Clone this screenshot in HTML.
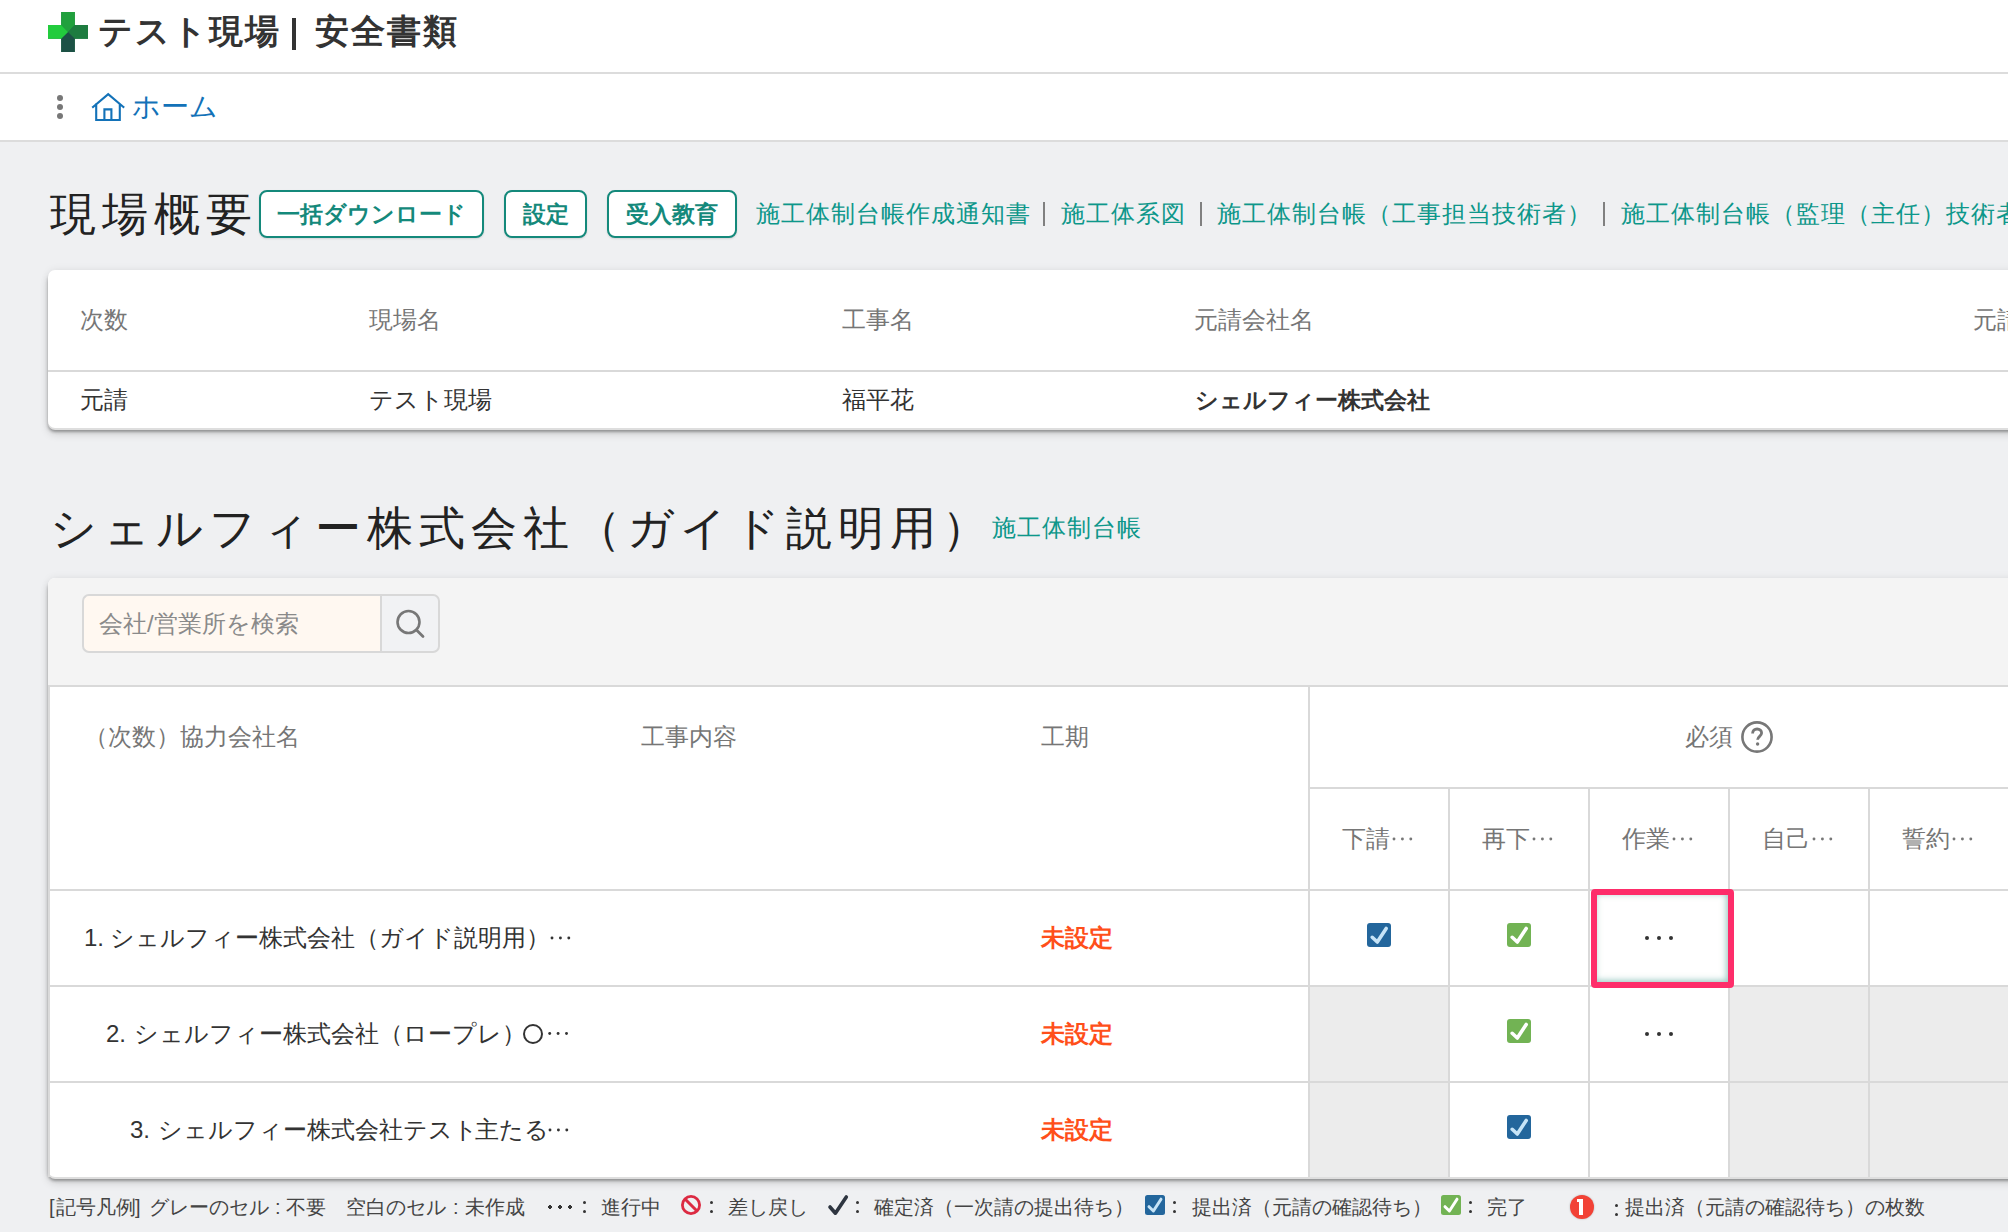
<!DOCTYPE html>
<html lang="ja">
<head>
<meta charset="utf-8">
<style>
html,body{margin:0;padding:0;}
body{width:2008px;height:1232px;overflow:hidden;position:relative;background:#eff0f2;font-family:"Liberation Sans",sans-serif;color:#333;}
.a{position:absolute;white-space:nowrap;}
#hdr{left:0;top:0;width:2008px;height:72px;background:#fff;border-bottom:2px solid #dcdcdc;}
#bc{left:0;top:74px;width:2008px;height:66px;background:#fff;border-bottom:2px solid #dcdcdc;}
.t24{font-size:24px;line-height:24px;}
.gray{color:#767676;}
.teal{color:#0d978a;}
.btn{position:absolute;top:190px;height:44px;border:2px solid #14897b;border-radius:8px;background:#fff;color:#14897b;font-weight:bold;font-size:23px;line-height:44px;text-align:center;box-shadow:0 1px 2px rgba(0,0,0,.12);}
.sep{position:absolute;top:202px;width:2px;height:24px;background:#808080;}
.card{position:absolute;background:#fff;border-radius:7px;box-shadow:0 2px 0 #dedede,0 4px 3px rgba(0,0,0,.3),0 6px 8px rgba(0,0,0,.14),0 0 8px rgba(0,0,0,.07);}
.vl{position:absolute;width:2px;background:#d9d9d9;}
.hl{position:absolute;height:2px;background:#d9d9d9;}
.gc{position:absolute;background:#ececec;}
.cb{position:absolute;width:24px;height:24px;border-radius:3px;}
.cbb{background:#23669c;}
.cbg{background:#72b354;}
.dots{position:absolute;width:4px;height:4px;border-radius:2px;background:#333;}
.ms{color:#ff4f1a;font-weight:bold;}
.d3{position:absolute;width:20px;height:3px;background:radial-gradient(circle at 1.5px 1.5px,#333 1.3px,transparent 1.6px) 0 0/8.5px 3px repeat-x;}
.d3.g{background-image:radial-gradient(circle at 1.5px 1.5px,#777 1.3px,transparent 1.6px);}
.lg{font-size:20px;line-height:20px;color:#444;}
</style>
</head>
<body>
<!-- header -->
<div id="hdr" class="a"></div>
<svg class="a" style="left:48px;top:12px" width="40" height="40" viewBox="48 12 40 40">
<path d="M61.2 12 H74.8 V25.1 H88 V38.7 H74.8 V52 H61.2 V38.7 H48 V25.1 H61.2 Z" fill="#1f7a44"/>
<polygon fill="#21a03d" points="61.2,12 74.8,12 74.8,25.1 68,31.9 61.2,25.1"/>
<polygon fill="#1e7c40" points="74.8,25.1 88,25.1 88,38.7 74.8,38.7 68,31.9"/>
<polygon fill="#1c5145" points="61.2,38.7 68,31.9 74.8,38.7 74.8,52 61.2,52"/>
<polygon fill="#22cc3d" points="48,25.1 61.2,25.1 68,31.9 61.2,38.7 48,38.7"/>
</svg>
<div id="title" class="a" style="left:98px;top:14px;font-size:34px;line-height:34px;letter-spacing:2px;font-weight:bold;color:#333">テスト現場</div>
<div class="a" style="left:292px;top:18px;width:4px;height:32px;background:#333"></div>
<div class="a" style="left:315px;top:14px;font-size:34px;line-height:34px;letter-spacing:2px;font-weight:bold;color:#333">安全書類</div>

<!-- breadcrumb -->
<div id="bc" class="a"></div>
<div class="a" style="left:57px;top:95px;width:6px;height:6px;border-radius:3px;background:#777"></div>
<div class="a" style="left:57px;top:104px;width:6px;height:6px;border-radius:3px;background:#777"></div>
<div class="a" style="left:57px;top:113px;width:6px;height:6px;border-radius:3px;background:#777"></div>
<svg class="a" style="left:88px;top:88px" width="40" height="36" viewBox="88 88 40 36">
<path d="M93 107 L108.2 94.2 L123.4 107 M96.2 104.2 V120 H119.8 V104.2 M104.4 120 V109.4 H111.4 V120" fill="none" stroke="#1372b8" stroke-width="2.1" stroke-linejoin="miter" stroke-linecap="square"/>
</svg>
<div id="home" class="a" style="left:132px;top:93px;font-size:28px;line-height:28px;color:#1372b8">ホーム</div>

<!-- section 1 -->
<div id="h1" class="a" style="left:50px;top:191px;font-size:46px;line-height:46px;letter-spacing:6px;color:#222">現場概要</div>
<div class="btn" style="left:259px;width:221px">一括ダウンロード</div>
<div class="btn" style="left:504px;width:79px">設定</div>
<div class="btn" style="left:607px;width:126px">受入教育</div>
<div class="a t24 teal" style="left:756px;top:202px;letter-spacing:1px">施工体制台帳作成通知書</div>
<div class="sep" style="left:1043px"></div>
<div class="a t24 teal" style="left:1061px;top:202px;letter-spacing:1px">施工体系図</div>
<div class="sep" style="left:1200px"></div>
<div class="a t24 teal" style="left:1217px;top:202px;letter-spacing:1px">施工体制台帳（工事担当技術者）</div>
<div class="sep" style="left:1603px"></div>
<div class="a t24 teal" style="left:1621px;top:202px;letter-spacing:1px">施工体制台帳（監理（主任）技術者）</div>

<!-- card 1 -->
<div class="card" style="left:48px;top:270px;width:2100px;height:158px"></div>
<div class="hl" style="left:48px;top:370px;width:1960px"></div>
<div class="a t24 gray" style="left:80px;top:308px">次数</div>
<div class="a t24 gray" style="left:369px;top:308px">現場名</div>
<div class="a t24 gray" style="left:842px;top:308px">工事名</div>
<div class="a t24 gray" style="left:1194px;top:308px">元請会社名</div>
<div class="a t24 gray" style="left:1973px;top:308px">元請</div>
<div class="a t24" style="left:80px;top:388px">元請</div>
<div class="a t24" style="left:369px;top:388px">テスト現場</div>
<div class="a t24" style="left:842px;top:388px">福平花</div>
<div class="a t24" style="left:1195px;top:388px;font-weight:bold;font-size:23px">シェルフィー株式会社</div>

<!-- section 2 -->
<div id="h2" class="a" style="left:50px;top:505px;font-size:46px;line-height:46px;letter-spacing:6px;color:#222">シェルフィー株式会社（ガイド説明用）</div>
<div class="a t24 teal" style="left:992px;top:516px;letter-spacing:1px">施工体制台帳</div>

<!-- card 2 -->
<div class="card" style="left:48px;top:578px;width:2100px;height:599px;overflow:hidden">
  <div style="position:absolute;left:0;top:0;width:100%;height:107px;background:#f4f4f4"></div>
</div>
<div class="hl" style="left:48px;top:685px;width:1960px"></div>
<!-- search -->
<div class="a" style="left:82px;top:594px;width:298px;height:59px;box-sizing:border-box;border:2px solid #d8d8d8;border-right:none;border-radius:7px 0 0 7px;background:#fff8f1"></div>
<div class="a" style="left:380px;top:594px;width:60px;height:59px;box-sizing:border-box;border:2px solid #d8d8d8;border-radius:0 7px 7px 0;background:#f1f2f4"></div>
<div class="a t24" style="left:99px;top:612px;color:#8a8a8a">会社/営業所を検索</div>
<svg class="a" style="left:390px;top:604px" width="40" height="40" viewBox="0 0 40 40">
<circle cx="18.5" cy="18" r="11" fill="none" stroke="#777" stroke-width="2.6"/>
<path d="M26.5 26 L33 32.5" stroke="#777" stroke-width="2.8" stroke-linecap="round"/>
</svg>

<!-- table header -->
<div class="a t24 gray" style="left:84px;top:725px">（次数）協力会社名</div>
<div class="a t24 gray" style="left:641px;top:725px">工事内容</div>
<div class="a t24 gray" style="left:1041px;top:725px">工期</div>
<div class="a t24 gray" style="left:1685px;top:725px">必須</div>
<svg class="a" style="left:1740px;top:720px" width="34" height="34" viewBox="0 0 34 34">
<circle cx="17" cy="17" r="14.6" fill="none" stroke="#777" stroke-width="2.6"/>
<path d="M12.6 13.4 C12.6 10.6 14.6 9 17.1 9 C19.7 9 21.6 10.7 21.6 13.1 C21.6 16.2 17.6 16.6 17.6 19.8" fill="none" stroke="#777" stroke-width="2.8"/>
<circle cx="17.6" cy="24" r="1.7" fill="#777"/>
</svg>
<div class="hl" style="left:1308px;top:787px;width:700px"></div>
<div class="a t24 gray" style="left:1342px;top:827px">下請</div><svg class="a" style="left:1391px;top:836px" width="23" height="6" fill="#777"><circle cx="3.00" cy="3.00" r="1.45"/><circle cx="11.40" cy="3.00" r="1.45"/><circle cx="19.80" cy="3.00" r="1.45"/></svg>
<div class="a t24 gray" style="left:1482px;top:827px">再下</div><svg class="a" style="left:1531px;top:836px" width="23" height="6" fill="#777"><circle cx="3.00" cy="3.00" r="1.45"/><circle cx="11.40" cy="3.00" r="1.45"/><circle cx="19.80" cy="3.00" r="1.45"/></svg>
<div class="a t24 gray" style="left:1622px;top:827px">作業</div><svg class="a" style="left:1671px;top:836px" width="23" height="6" fill="#777"><circle cx="3.00" cy="3.00" r="1.45"/><circle cx="11.40" cy="3.00" r="1.45"/><circle cx="19.80" cy="3.00" r="1.45"/></svg>
<div class="a t24 gray" style="left:1762px;top:827px">自己</div><svg class="a" style="left:1811px;top:836px" width="23" height="6" fill="#777"><circle cx="3.00" cy="3.00" r="1.45"/><circle cx="11.40" cy="3.00" r="1.45"/><circle cx="19.80" cy="3.00" r="1.45"/></svg>
<div class="a t24 gray" style="left:1902px;top:827px">誓約</div><svg class="a" style="left:1951px;top:836px" width="23" height="6" fill="#777"><circle cx="3.00" cy="3.00" r="1.45"/><circle cx="11.40" cy="3.00" r="1.45"/><circle cx="19.80" cy="3.00" r="1.45"/></svg>

<!-- gray cells -->
<div class="gc" style="left:1310px;top:987px;width:138px;height:94px"></div>
<div class="gc" style="left:1730px;top:987px;width:138px;height:94px"></div>
<div class="gc" style="left:1870px;top:987px;width:138px;height:94px"></div>
<div class="gc" style="left:1310px;top:1083px;width:138px;height:94px"></div>
<div class="gc" style="left:1730px;top:1083px;width:138px;height:94px"></div>
<div class="gc" style="left:1870px;top:1083px;width:138px;height:94px"></div>

<!-- grid -->
<div class="hl" style="left:48px;top:889px;width:1960px"></div>
<div class="hl" style="left:48px;top:985px;width:1960px"></div>
<div class="hl" style="left:48px;top:1081px;width:1960px"></div>
<div class="vl" style="left:1308px;top:687px;height:490px"></div>
<div class="vl" style="left:1448px;top:789px;height:388px"></div>
<div class="vl" style="left:1588px;top:789px;height:388px"></div>
<div class="vl" style="left:1728px;top:789px;height:388px"></div>
<div class="vl" style="left:1868px;top:789px;height:388px"></div>
<div class="vl" style="left:48px;top:687px;height:490px;background:#dadada"></div>

<!-- rows -->
<div class="a t24" style="left:84px;top:926px">1.</div>
<div class="a t24" style="left:110px;top:926px">シェルフィー株式会社（ガイド説明用）</div>
<svg class="a" style="left:549px;top:935px" width="23" height="6" fill="#333"><circle cx="3.00" cy="3.00" r="1.45"/><circle cx="11.40" cy="3.00" r="1.45"/><circle cx="19.80" cy="3.00" r="1.45"/></svg>
<div class="a t24" style="left:106px;top:1022px">2.</div>
<div class="a t24" style="left:134px;top:1022px">シェルフィー株式会社（ロープレ）</div>
<div class="a" style="left:523px;top:1024px;width:16px;height:16px;border:2px solid #333;border-radius:50%"></div>
<svg class="a" style="left:546px;top:1030px" width="23" height="6" fill="#333"><circle cx="3.70" cy="3.50" r="1.45"/><circle cx="12.10" cy="3.50" r="1.45"/><circle cx="20.50" cy="3.50" r="1.45"/></svg>
<div class="a t24" style="left:130px;top:1118px">3.</div>
<div class="a t24" style="left:158px;top:1118px">シェルフィー株式会社テスト</div>
<div class="a t24" style="left:475px;top:1118px">主たる</div>
<svg class="a" style="left:547px;top:1127px" width="23" height="6" fill="#333"><circle cx="3.00" cy="3.00" r="1.45"/><circle cx="11.40" cy="3.00" r="1.45"/><circle cx="19.80" cy="3.00" r="1.45"/></svg>
<div class="a t24 ms" style="left:1041px;top:926px">未設定</div>
<div class="a t24 ms" style="left:1041px;top:1022px">未設定</div>
<div class="a t24 ms" style="left:1041px;top:1118px">未設定</div>

<!-- checkboxes -->
<svg class="a" style="left:1367px;top:923px" width="24" height="24" viewBox="0 0 24 24"><rect width="24" height="24" rx="3" fill="#23669c"/><path d="M5.2 14.3 L10.3 19 L19.2 5.5" fill="none" stroke="#c6e4f7" stroke-width="3.6" stroke-linecap="round" stroke-linejoin="round"/></svg>
<svg class="a" style="left:1507px;top:923px" width="24" height="24" viewBox="0 0 24 24"><rect width="24" height="24" rx="3" fill="#72b354"/><path d="M5.2 14.3 L10.3 19 L19.2 5.5" fill="none" stroke="#fff" stroke-width="3.6" stroke-linecap="round" stroke-linejoin="round"/></svg>
<svg class="a" style="left:1507px;top:1019px" width="24" height="24" viewBox="0 0 24 24"><rect width="24" height="24" rx="3" fill="#72b354"/><path d="M5.2 14.3 L10.3 19 L19.2 5.5" fill="none" stroke="#fff" stroke-width="3.6" stroke-linecap="round" stroke-linejoin="round"/></svg>
<svg class="a" style="left:1507px;top:1115px" width="24" height="24" viewBox="0 0 24 24"><rect width="24" height="24" rx="3" fill="#23669c"/><path d="M5.2 14.3 L10.3 19 L19.2 5.5" fill="none" stroke="#c6e4f7" stroke-width="3.6" stroke-linecap="round" stroke-linejoin="round"/></svg>

<!-- dots -->
<div class="dots" style="left:1645px;top:936px"></div>
<div class="dots" style="left:1657px;top:936px"></div>
<div class="dots" style="left:1669px;top:936px"></div>
<div class="dots" style="left:1645px;top:1032px"></div>
<div class="dots" style="left:1657px;top:1032px"></div>
<div class="dots" style="left:1669px;top:1032px"></div>

<!-- highlight -->
<div class="a" style="left:1591px;top:889px;width:143px;height:99px;box-sizing:border-box;border:6px solid #fe2d6a;border-radius:4px;box-shadow:inset -1.5px -1.5px 6px rgba(40,140,125,.5)"></div>

<!-- legend -->
<div class="a lg" style="left:49px;top:1197px">[</div>
<div class="a lg" style="left:56px;top:1197px">記号凡例</div>
<div class="a lg" style="left:135px;top:1197px">]</div>
<div class="a lg" style="left:149px;top:1197px">グレーのセル</div>
<div class="a lg" style="left:275px;top:1197px">:</div>
<div class="a lg" style="left:286px;top:1197px">不要</div>
<div class="a lg" style="left:346px;top:1197px">空白のセル</div>
<div class="a lg" style="left:453px;top:1197px">:</div>
<div class="a lg" style="left:465px;top:1197px">未作成</div>
<div class="a" style="left:548px;top:1205px;width:24px;height:4px;background:radial-gradient(circle at 2px 2px,#333 1.7px,transparent 2px) 0 0/10px 4px repeat-x"></div>
<div class="a" style="left:583px;top:1201px;width:3px;height:3px;border-radius:50%;background:#333"></div>
<div class="a" style="left:583px;top:1210px;width:3px;height:3px;border-radius:50%;background:#333"></div>
<div class="a lg" style="left:601px;top:1197px">進行中</div>
<svg class="a" style="left:680px;top:1194px" width="22" height="22" viewBox="0 0 22 22"><circle cx="11" cy="11" r="8.6" fill="none" stroke="#dc2a42" stroke-width="2.8"/><path d="M5 5 L17 17" stroke="#dc2a42" stroke-width="3"/></svg>
<div class="a" style="left:710px;top:1201px;width:3px;height:3px;border-radius:50%;background:#333"></div>
<div class="a" style="left:710px;top:1210px;width:3px;height:3px;border-radius:50%;background:#333"></div>
<div class="a lg" style="left:728px;top:1197px">差し戻し</div>
<svg class="a" style="left:826px;top:1194px" width="24" height="22" viewBox="0 0 24 22"><path d="M4 13 L9.4 19.2 L20.3 3" fill="none" stroke="#2e3540" stroke-width="3.6" stroke-linecap="round" stroke-linejoin="round"/></svg>
<div class="a" style="left:856px;top:1201px;width:3px;height:3px;border-radius:50%;background:#333"></div>
<div class="a" style="left:856px;top:1210px;width:3px;height:3px;border-radius:50%;background:#333"></div>
<div class="a lg" style="left:874px;top:1197px">確定済（一次請の提出待ち）</div>
<svg class="a" style="left:1145px;top:1195px" width="20" height="20" viewBox="0 0 20 20"><rect width="20" height="20" rx="2.5" fill="#23669c"/><path d="M4 11.7 L8.4 16 L16 4.2" fill="none" stroke="#c6e4f7" stroke-width="3" stroke-linecap="round" stroke-linejoin="round"/></svg>
<div class="a" style="left:1173px;top:1201px;width:3px;height:3px;border-radius:50%;background:#333"></div>
<div class="a" style="left:1173px;top:1210px;width:3px;height:3px;border-radius:50%;background:#333"></div>
<div class="a lg" style="left:1192px;top:1197px">提出済（元請の確認待ち）</div>
<svg class="a" style="left:1441px;top:1195px" width="20" height="20" viewBox="0 0 20 20"><rect width="20" height="20" rx="2.5" fill="#72b354"/><path d="M4 11.7 L8.4 16 L16 4.2" fill="none" stroke="#fff" stroke-width="3" stroke-linecap="round" stroke-linejoin="round"/></svg>
<div class="a" style="left:1469px;top:1201px;width:3px;height:3px;border-radius:50%;background:#333"></div>
<div class="a" style="left:1469px;top:1210px;width:3px;height:3px;border-radius:50%;background:#333"></div>
<div class="a lg" style="left:1487px;top:1197px">完了</div>
<div class="a" style="left:1570px;top:1195px;width:24px;height:24px;border-radius:50%;background:#f24236;box-shadow:0 0 2px rgba(0,0,0,.25)"></div>
<div class="a" style="left:1577px;top:1199px;width:8px;height:16px"><div style="position:absolute;left:2px;top:0;width:4px;height:16px;background:#fff"></div><div style="position:absolute;left:0;top:0;width:4px;height:3px;background:#fff"></div></div>
<div class="a" style="left:1615px;top:1204px;width:3px;height:3px;border-radius:50%;background:#333"></div>
<div class="a" style="left:1615px;top:1213px;width:3px;height:3px;border-radius:50%;background:#333"></div>
<div class="a lg" style="left:1625px;top:1197px">提出済（元請の確認待ち）の枚数</div>
</body>
</html>
